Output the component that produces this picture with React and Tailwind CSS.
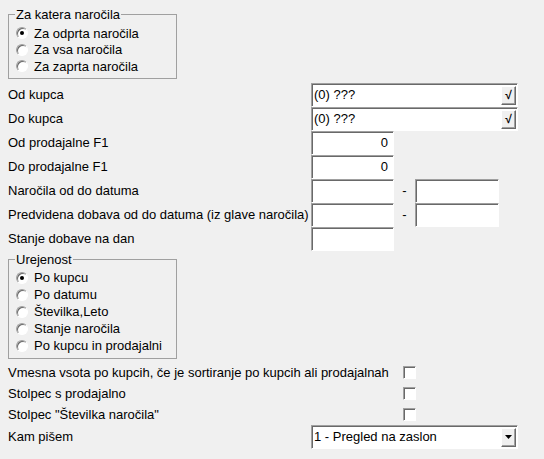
import { useState } from "react";

const sunken =
  "border border-t-[#a0a0a0] border-l-[#a0a0a0] border-b-white border-r-white shadow-[inset_1px_1px_0_#696969]";

const Radio = ({ checked, label, onClick, h = "h-[16.5px]" }) => (
  <div className={`flex ${h} items-center`} onClick={onClick}>
    <span
      className={`ml-[7px] flex h-[12px] w-[12px] items-center justify-center rounded-full bg-white ${sunken}`}
    >
      {checked && <span className="h-[4px] w-[4px] rounded-full bg-black" />}
    </span>
    <span className="ml-[6px]">{label}</span>
  </div>
);

const Group = ({ title, children, className }) => (
  <fieldset className={`w-[169px] border border-[#a0a0a0] ${className}`}>
    <legend className="ml-[6px] px-[1px] leading-[15px]">{title}</legend>
    {children}
  </fieldset>
);

const Field = ({ value = "", align = "left", w = "w-[83px]" }) => (
  <div
    className={`flex h-[24px] ${w} items-center bg-white ${sunken} ${
      align === "right" ? "justify-end pr-[5px]" : "pl-[2px]"
    }`}
  >
    {value}
  </div>
);

// small drop-down arrow for the list box button
const Arrow = () => (
  <svg width="7" height="4" viewBox="0 0 7 4">
    <path d="M0 0h7L3.5 4z" fill="#000" />
  </svg>
);

const Combo = ({ value, icon }) => (
  <div className={`flex h-[24px] w-[207px] items-center bg-white pl-[2px] ${sunken}`}>
    <span className="flex-1">{value}</span>
    <span className="mr-[1px] flex h-[19px] w-[15px] items-center justify-center border border-t-white border-l-white border-b-[#696969] border-r-[#696969] bg-[#f0f0f0] text-[12px] font-bold shadow-[inset_-1px_-1px_0_#a0a0a0]">
      {icon}
    </span>
  </div>
);

const Row = ({ label, children, h = "h-[24px]" }) => (
  <div className={`flex ${h} items-center`}>
    <span className="w-[303px]">{label}</span>
    {children}
  </div>
);

const Check = ({ label }) => {
  const [on, setOn] = useState(false);
  return (
    <div className="flex h-[21px] items-center" onClick={() => setOn(!on)}>
      <span className="w-[395px]">{label}</span>
      <span
        className={`flex h-[13px] w-[13px] items-center justify-center bg-white text-[10px] ${sunken}`}
      >
        {on ? "✓" : ""}
      </span>
    </div>
  );
};

export default function App() {
  const [scope, setScope] = useState(0);
  const [order, setOrder] = useState(0);

  const scopes = ["Za odprta naročila", "Za vsa naročila", "Za zaprta naročila"];
  const orders = [
    "Po kupcu",
    "Po datumu",
    "Številka,Leto",
    "Stanje naročila",
    "Po kupcu in prodajalni",
  ];

  return (
    <div className="h-[459px] w-[544px] bg-[#f0f0f0] pl-[8px] pt-[7px] font-['Liberation_Sans',Arial,sans-serif] text-[13px] text-black">
      <Group title="Za katera naročila" className="h-[72px]">
        <div className="pt-[3px]">
          {scopes.map((s, i) => (
            <Radio key={s} label={s} checked={scope === i} onClick={() => setScope(i)} />
          ))}
        </div>
      </Group>

      <div className="mt-[4px]">
        <Row label="Od kupca">
          <Combo value="(0) ???" icon="√" />
        </Row>
        <Row label="Do kupca">
          <Combo value="(0) ???" icon="√" />
        </Row>
        <Row label="Od prodajalne F1">
          <Field value="0" align="right" />
        </Row>
        <Row label="Do prodajalne F1">
          <Field value="0" align="right" />
        </Row>
        <Row label="Naročila od do datuma">
          <Field />
          <span className="w-[21px] text-center">-</span>
          <Field w="w-[84px]" />
        </Row>
        <Row label="Predvidena dobava od do datuma (iz glave naročila)">
          <Field />
          <span className="w-[21px] text-center">-</span>
          <Field w="w-[84px]" />
        </Row>
        <Row label="Stanje dobave na dan">
          <Field />
        </Row>
      </div>

      <Group title="Urejenost" className="mt-[1px] h-[107px]">
        <div className="pt-[2px]">
          {orders.map((s, i) => (
            <Radio
              key={s}
              label={s}
              h="h-[17px]"
              checked={order === i}
              onClick={() => setOrder(i)}
            />
          ))}
        </div>
      </Group>

      <div className="mt-[3px]">
        <Check label="Vmesna vsota po kupcih, če je sortiranje po kupcih ali prodajalnah" />
        <Check label="Stolpec s prodajalno" />
        <Check label='Stolpec "Številka naročila"' />
        <Row label="Kam pišem">
          <Combo value="1 - Pregled na zaslon" icon={<Arrow />} />
        </Row>
      </div>
    </div>
  );
}
